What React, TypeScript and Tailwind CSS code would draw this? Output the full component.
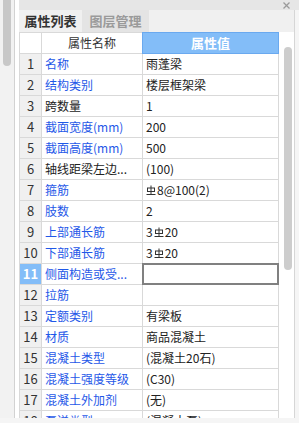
import React from 'react';

type Row = { n: number; name: string; blue: boolean; value: React.ReactNode };

const Rebar = () => (
  <svg width="10" height="11" viewBox="0 0 10 11" className="inline-block shrink-0" style={{ marginTop: -2 }}>
    <line x1="5" y1="0.5" x2="5" y2="9.5" stroke="#333" strokeWidth="1" />
    <rect x="1.5" y="3" width="7" height="3.5" fill="none" stroke="#333" strokeWidth="1" />
    <line x1="0.5" y1="9.5" x2="9.5" y2="9.5" stroke="#333" strokeWidth="1" />
  </svg>
);

const rows: Row[] = [
  { n: 1, name: '名称', blue: true, value: '雨蓬梁' },
  { n: 2, name: '结构类别', blue: true, value: '楼层框架梁' },
  { n: 3, name: '跨数量', blue: false, value: '1' },
  { n: 4, name: '截面宽度(mm)', blue: true, value: '200' },
  { n: 5, name: '截面高度(mm)', blue: true, value: '500' },
  { n: 6, name: '轴线距梁左边...', blue: false, value: '(100)' },
  {
    n: 7,
    name: '箍筋',
    blue: true,
    value: (
      <span className="flex items-center">
        <span className="mr-[1px]"><Rebar /></span>8@100(2)
      </span>
    ),
  },
  { n: 8, name: '肢数', blue: true, value: '2' },
  {
    n: 9,
    name: '上部通长筋',
    blue: true,
    value: (
      <span className="flex items-center">
        3<span className="mx-[1px]"><Rebar /></span>20
      </span>
    ),
  },
  {
    n: 10,
    name: '下部通长筋',
    blue: true,
    value: (
      <span className="flex items-center">
        3<span className="mx-[1px]"><Rebar /></span>20
      </span>
    ),
  },
  { n: 11, name: '侧面构造或受...', blue: true, value: '' },
  { n: 12, name: '拉筋', blue: true, value: '' },
  { n: 13, name: '定额类别', blue: true, value: '有梁板' },
  { n: 14, name: '材质', blue: true, value: '商品混凝土' },
  { n: 15, name: '混凝土类型', blue: true, value: '(混凝土20石)' },
  { n: 16, name: '混凝土强度等级', blue: true, value: '(C30)' },
  { n: 17, name: '混凝土外加剂', blue: true, value: '(无)' },
  { n: 18, name: '泵送类型', blue: true, value: '(混凝土泵)' },
];

export default function App() {
  return (
    <div className="w-[299px] h-[423px] overflow-hidden bg-[#f5f5f5] font-['Noto_Sans_CJK_SC',sans-serif] text-[12px] text-[#222]">
      <div className="flex h-[418px]">
        {/* left strip */}
        <div className="w-[15px] h-full bg-[#f2f2f2] border-r border-[#d2d2d2] shrink-0">
          <div className="ml-[3px] w-[8px] h-[66px] bg-[#c8c8c8] rounded-b-[4px]" />
        </div>
        <div className="w-[4px] h-full bg-white shrink-0" />
        {/* content column */}
        <div className="flex-1 flex flex-col">
          <div className="h-[10px] bg-[#e6e6e6] flex justify-end items-start pr-[9px] pt-[2px]">
            <svg width="7" height="7" viewBox="0 0 7 7">
              <line x1="0.5" y1="0.5" x2="6.5" y2="6.5" stroke="#9a9a9a" strokeWidth="1.2" />
              <line x1="6.5" y1="0.5" x2="0.5" y2="6.5" stroke="#9a9a9a" strokeWidth="1.2" />
            </svg>
          </div>
          <div className="flex flex-1 min-h-0">
            <div className="w-[276px] h-full bg-white border-r border-[#d6d6d6] overflow-hidden flex flex-col shrink-0">
              {/* tabs */}
              <div className="h-[22px] bg-[#f0f0f0] flex shrink-0 text-[13px]">
                <div className="w-[63px] flex items-center justify-center font-bold text-[#333] leading-[22px]">属性列表</div>
                <div className="w-[67px] bg-[#e4e4e4] flex items-center justify-center font-bold text-[#9a9a9a] leading-[22px]">图层管理</div>
              </div>
              <div className="flex flex-1 min-h-0">
                {/* table */}
                <div className="w-[260px] shrink-0 flex flex-col">
                  <div className="flex h-[22px] shrink-0">
                    <div className="w-[23px] border border-[#d9d9d9] bg-white" />
                    <div className="w-[100px] border-t border-b border-[#d9d9d9] bg-white flex items-center justify-center text-[#333] leading-[20px]">属性名称</div>
                    <div className="w-[137px] border border-[#6aa9ef] bg-[#83bdf8] flex items-center justify-center text-white font-bold leading-[20px] text-[13px]">属性值</div>
                  </div>
                  {rows.map((r) => {
                    const sel = r.n === 11;
                    return (
                      <div key={r.n} className="flex h-[21px] shrink-0">
                        <div
                          className={
                            sel
                              ? 'w-[23px] border-l border-r border-b border-[#d9d9d9] bg-[#83bdf8] text-white font-bold flex items-center justify-center leading-[20px] text-[13px]'
                              : 'w-[23px] border-l border-r border-b border-[#d9d9d9] bg-[#f0f0f0] text-[#333] flex items-center justify-center leading-[20px] text-[13px]'
                          }
                        >
                          {r.n}
                        </div>
                        <div
                          className={
                            r.blue
                              ? 'w-[101px] border-r border-b border-[#d9d9d9] pl-[3px] flex items-center whitespace-nowrap overflow-hidden text-[#1f58e8] leading-[20px]'
                              : 'w-[101px] border-r border-b border-[#d9d9d9] pl-[3px] flex items-center whitespace-nowrap overflow-hidden text-[#222] leading-[20px]'
                          }
                        >
                          {r.name}
                        </div>
                        <div className="relative w-[136px] border-r border-b border-[#d9d9d9] pl-[3px] flex items-center whitespace-nowrap text-[#222] leading-[20px]">
                          {r.value}
                          {sel && <div className="absolute inset-[-1px] border-2 border-[#808080]" />}
                        </div>
                      </div>
                    );
                  })}
                </div>
                {/* scrollbar */}
                <div className="ml-[5px] mt-[15px] w-[8px] h-[223px] rounded-full bg-[#cdcdcd] shrink-0" />
              </div>
            </div>
            <div className="flex-1 bg-[#f5f5f5]" />
          </div>
        </div>
      </div>
    </div>
  );
}
